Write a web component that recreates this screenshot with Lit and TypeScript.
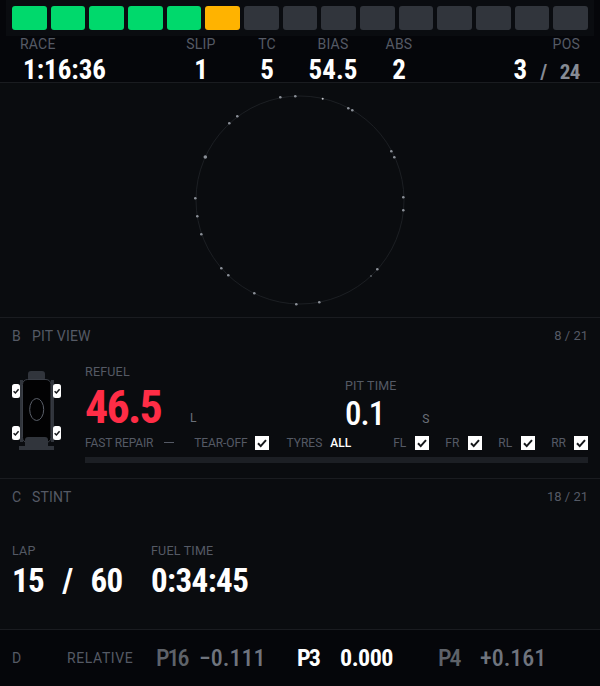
import { LitElement, html, css, svg } from "lit";
import { customElement } from "lit/decorators.js";

const DOTS: [number, number, number?, string?][] = [
  [280.3,97.3],[295.3,96.3],[322.7,98.7,1,"#c4c7cc"],[348.3,108.3],[352.3,110.3],[391.3,151.3],[394.3,157.3],
  [403.3,197.3],[403.3,210.3],[377.3,269.3],[371,276,0.8],[319.3,302.3],[296.3,304.3],[254.3,293.3],
  [228.3,275.3],[221.3,268.3],[201.3,234.3],[197.3,216.3],[195.3,198.3],[205.3,157,1.8],[229.3,123.3],[237.3,116.3],
];

const check = html`<svg class="cb" viewBox="0 0 14 14" width="14" height="14"><rect width="14" height="14" fill="#fff"/><path d="M3 7.3 5.7 10.1 11 4.1" fill="none" stroke="#15171a" stroke-width="2"/></svg>`;

const wheel = (x: number, y: number) => svg`<rect x=${x} y=${y} width="8" height="14" rx="2.5" fill="#fff"/><path d=${`M${x + 1.6} ${y + 7.2}l1.8 1.8 3.2-3.8`} fill="none" stroke="#15171a" stroke-width="1.5"/>`;

@customElement("app-root")
export class AppRoot extends LitElement {
  static styles = css`
    :host { display: block; width: 600px; height: 686px; overflow: hidden; background: #0a0c0f; font-family: "Roboto", sans-serif; color: #fff; }
    .num { font-family: "Roboto", sans-serif; font-stretch: 75%; font-weight: 700; color: #fff; white-space: pre; line-height: 1; }
    .lab { font-size: 14px; line-height: 16px; color: #555a65; white-space: pre; letter-spacing: 0.2px; }
    .lab.sm { font-size: 12.5px; }

    .top { height: 82px; background: #05060a; border-bottom: 1px solid #1a1c20; }
    .leds-wrap { margin: 0 6px; padding: 6px; height: 24px; background: #0a0c10; display: grid; grid-template-columns: repeat(15, 1fr); gap: 4px; }
    .led { border-radius: 3px; background: #31353c; }
    .led.g { background: #00d96c; }
    .led.y { background: #ffb300; }
    .stats { display: flex; padding: 0 20px; }
    .stat { display: flex; flex-direction: column; width: 66px; align-items: center; }
    .stat.race { width: 148px; align-items: flex-start; }
    .stat.pos { flex: 1; align-items: flex-end; }
    .stat .num { font-size: 27px; letter-spacing: 0; margin-top: 5px; }
    .race .num { margin-left: 3px; }
    .pos .sub { color: #868b95; font-size: 21px; letter-spacing: -0.5px; }

    .ringbox { height: 234px; background: #0a0c0f; border-bottom: 1px solid #1a1c20; }
    .ringbox svg { display: block; }

    .sec { border-bottom: 1px solid #1a1c20; background: #0a0c0f; }
    .head { display: flex; align-items: center; padding: 10px 12px 0; height: 16px; }
    .head .k { width: 20px; }
    .head .t { flex: 1; }
    .head .frac { font-size: 13px; letter-spacing: 0; }
    .pit { height: 161px; box-sizing: border-box; }
    .pitbody { display: flex; margin-top: 20px; padding-left: 12px; }
    .car { display: block; width: 50px; height: 82px; margin-top: 7px; flex: none; }
    .pitmain { margin-left: 23px; width: 503px; }
    .vals { display: flex; height: 69px; }
    .refuel { width: 260px; display: flex; flex-direction: column; }
    .refuel .big { display: flex; align-items: flex-end; margin-top: 4px; }
    .big .num { font-size: 46px; color: #ff2d46; letter-spacing: -1.8px; }
    .unit { font-size: 12px; line-height: 14px; color: #6a7079; }
    .big .unit { margin-left: 29px; margin-bottom: 5px; }
    .pittime { display: flex; flex-direction: column; margin-top: 14px; }
    .pt { display: flex; align-items: flex-end; margin-top: 3px; }
    .pt .num { font-size: 33px; letter-spacing: -1px; font-weight: 500; }
    .pt .unit { margin-left: 38px; margin-bottom: 4px; }
    .opts { display: flex; align-items: center; height: 15px; margin-top: 2px; font-size: 12px; color: #555a65; }
    .opts span { white-space: pre; }
    .cb { display: block; flex: none; }
    .all { color: #fff; font-weight: 500; margin-left: 8px; margin-right: 42px; }
    .fast { letter-spacing: -0.15px; }
    .dash { width: 10px; height: 1px; background: #555a65; margin: 0 20px 0 11px; }
    .opts .tear { margin-right: 8px; letter-spacing: -0.1px; }
    .opts .tyres { margin-left: 17px; }
    .opts .w { margin-right: 9px; }
    .opts .w.next { margin-left: 16px; }
    .opts .w.last { margin-right: 8px; }
    .bar { height: 6px; background: #1c1f24; margin-top: 7px; }

    .stint { height: 151px; box-sizing: border-box; }
    .cols { display: flex; padding: 38px 12px 0; }
    .col { display: flex; flex-direction: column; }
    .col.lap { width: 139px; }
    .col .num { font-size: 33px; letter-spacing: -0.6px; word-spacing: 2px; margin-top: 5px; }

    .rel { height: 56px; background: #05060a; display: flex; align-items: center; padding-left: 12px; }
    .rel .lab.d { width: 55px; }
    .rel .lab.r { width: 89px; letter-spacing: 0.6px; }
    .rel .num { font-size: 24px; letter-spacing: 0; color: #6f747e; font-weight: 500; }
    .rel .num.p { color: #5e6269; letter-spacing: -2px; width: 43px; }
    .rel .num.p.last { width: 42px; }
    .rel .num.v { width: 98px; }
    .rel .num.v.me { letter-spacing: -0.5px; }
    .rel .num.me { color: #fff; font-weight: 700; }
  `;

  render() {
    const leds = Array.from({ length: 15 }, (_, i) => html`<div class="led ${i < 5 ? "g" : i === 5 ? "y" : ""}"></div>`);
    return html`
      <div class="top">
        <div class="leds-wrap">${leds}</div>
        <div class="stats">
          <div class="stat race"><span class="lab">RACE</span><span class="num">1:16:36</span></div>
          <div class="stat"><span class="lab">SLIP</span><span class="num">1</span></div>
          <div class="stat"><span class="lab">TC</span><span class="num">5</span></div>
          <div class="stat"><span class="lab">BIAS</span><span class="num">54.5</span></div>
          <div class="stat"><span class="lab">ABS</span><span class="num">2</span></div>
          <div class="stat pos"><span class="lab">POS</span><span class="num">3<span class="sub">   /   24</span></span></div>
        </div>
      </div>

      <div class="ringbox">
        <svg width="600" height="234" viewBox="0 83 600 234">
          <circle cx="300" cy="200" r="104" fill="none" stroke="#1c1f23" stroke-width="1"/>
          ${DOTS.map(([x, y, r, c]) => svg`<circle cx=${x} cy=${y} r=${r ?? 1.3} fill=${c ?? "#8a8f97"}/>`)}
        </svg>
      </div>

      <div class="sec pit">
        <div class="head lab"><span class="k">B</span><span class="t">PIT VIEW</span><span class="frac">8 / 21</span></div>
        <div class="pitbody">
          <svg class="car" viewBox="12 371 50 82">
            <rect x="28" y="371" width="17" height="10" rx="3" fill="#31353c"/>
            <rect x="20" y="380" width="3" height="62" fill="#31353c"/>
            <rect x="51" y="380" width="3" height="62" fill="#31353c"/>
            <rect x="22.5" y="379.5" width="28.5" height="63" rx="5" fill="#020203" stroke="#3a3e46"/>
            <ellipse cx="36.7" cy="409.5" rx="7" ry="11" fill="none" stroke="#5a5f69"/>
            <path d="M25 446v-6q0-3 3-3h17q3 0 3 3v6z" fill="#31353c"/>
            <rect x="19" y="446" width="35" height="4" fill="#31353c"/>
            ${wheel(12, 384)}${wheel(53, 384)}${wheel(12, 426)}${wheel(53, 426)}
          </svg>
          <div class="pitmain">
            <div class="vals">
              <div class="refuel">
                <span class="lab sm">REFUEL</span>
                <div class="big"><span class="num">46.5</span><span class="unit">L</span></div>
              </div>
              <div class="pittime">
                <span class="lab sm">PIT TIME</span>
                <div class="pt"><span class="num">0.1</span><span class="unit">S</span></div>
              </div>
            </div>
            <div class="opts">
              <span class="fast">FAST REPAIR</span><div class="dash"></div>
              <span class="tear">TEAR-OFF</span>${check}
              <span class="tyres">TYRES</span><span class="all">ALL</span>
              <span class="w">FL</span>${check}
              <span class="w next">FR</span>${check}
              <span class="w next">RL</span>${check}
              <span class="w next last">RR</span>${check}
            </div>
            <div class="bar"></div>
          </div>
        </div>
      </div>

      <div class="sec stint">
        <div class="head lab"><span class="k">C</span><span class="t">STINT</span><span class="frac">18 / 21</span></div>
        <div class="cols">
          <div class="col lap"><span class="lab sm">LAP</span><span class="num">15  /  60</span></div>
          <div class="col"><span class="lab sm">FUEL TIME</span><span class="num">0:34:45</span></div>
        </div>
      </div>

      <div class="rel">
        <span class="lab d">D</span>
        <span class="lab r">RELATIVE</span>
        <span class="num p">P16</span>
        <span class="num v">−0.111</span>
        <span class="num p me">P3</span>
        <span class="num v me">0.000</span>
        <span class="num p last">P4</span>
        <span class="num">+0.161</span>
      </div>
    `;
  }
}
